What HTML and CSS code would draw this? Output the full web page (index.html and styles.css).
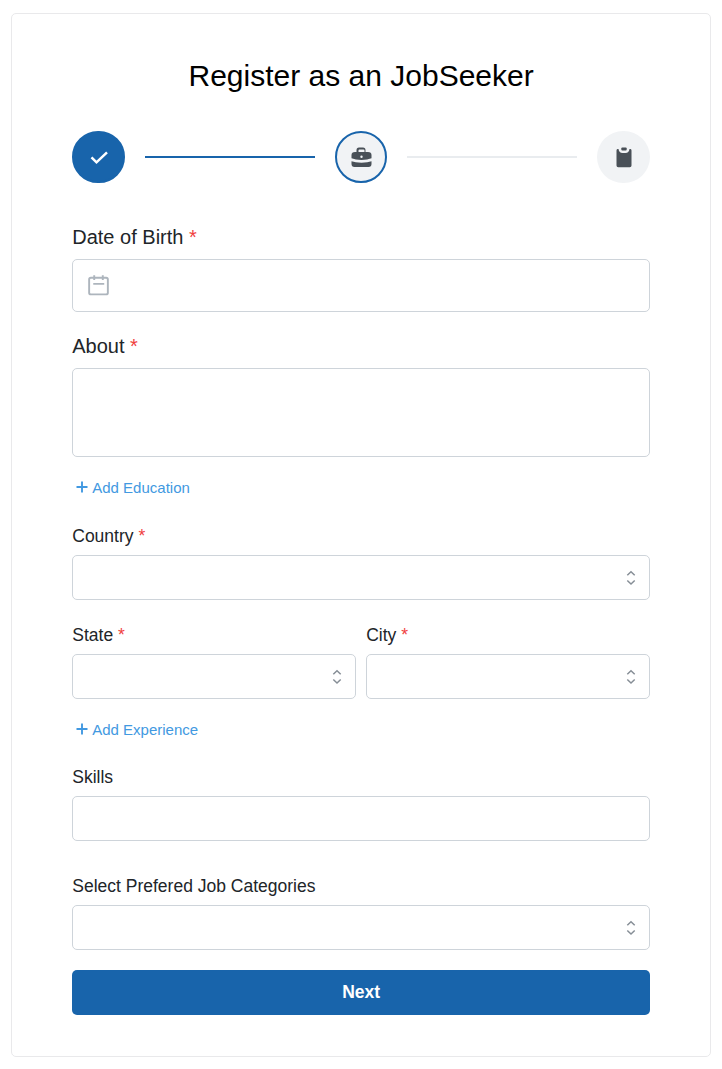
FILE: index.html
```html
<!DOCTYPE html>
<html lang="en">
<head>
<meta charset="utf-8">
<title>Register as an JobSeeker</title>
<link rel="stylesheet" href="styles.css">
</head>
<body>
<svg class="sprite" aria-hidden="true">
  <symbol id="selector" viewBox="0 0 10 16"><path d="M1.300 5.200 5 1.700 8.700 5.200M1.300 10.500 5 14 8.700 10.500" fill="none" stroke="#868e96" stroke-width="1.500"/></symbol>
  <symbol id="plus" viewBox="0 0 12 12"><path d="M6 .5v11M.5 6h11" fill="none" stroke="#4299e1" stroke-width="1.900"/></symbol>
</svg>
<main class="card">
  <h1 class="title">Register as an JobSeeker</h1>
  <div class="steps">
    <div class="step step-done">
      <svg width="20" height="16" viewBox="0 0 20 16"><path d="M2.500 8.300l5 5L18 3.300" fill="none" stroke="#fff" stroke-width="2.500"/></svg>
    </div>
    <div class="line line-done"></div>
    <div class="step step-active">
      <svg width="22" height="22" viewBox="0 0 22 22"><path fill="#495057" fill-rule="evenodd" d="M6.500 6V4.200Q6.500 1.500 9 1.500h4q2.500 0 2.500 2.700V6H18q3.500 0 3.500 3v3.300Q17.500 14 11.500 14T1.500 12.300V9q0-3 3.500-3zM8.500 6h6V4.600q0-1.100-1-1.100h-4q-1 0-1 1.100zM11.500 9.500a1.200 1.200 0 1 0 0 2.400 1.200 1.200 0 0 0 0-2.400z"/><path fill="#495057" d="M1.500 15.300q3.500 1.400 10 1.400t10-1.400V18q0 3-3 3h-14q-3 0-3-3z"/></svg>
    </div>
    <div class="line"></div>
    <div class="step step-last">
      <svg width="16" height="22" viewBox="0 0 16 22"><path fill="#495057" d="M1.500 3h1q.6 4 4 4h3q3.400 0 4-4h1q1 .4 1 1.500v15q0 1.700-1.700 1.700H2.200Q.5 21.200.5 19.500v-15Q.5 3.400 1.500 3z"/><rect x="5.300" y="1.500" width="5.400" height="3" rx="1" fill="#495057"/></svg>
    </div>
  </div>

  <label class="label label-lg">Date of Birth <span class="req">*</span></label>
  <div class="input input-date">
    <svg width="22" height="22" viewBox="0 0 22 22" fill="none" stroke="#adb5bd" stroke-width="2"><rect x="1.200" y="2.800" width="19.600" height="17.500" rx="1.800"/><path d="M6.500.3v5M15.500.3v5M5.500 9.300h11.500"/></svg>
  </div>
  <label class="label label-lg about">About <span class="req">*</span></label>
  <div class="input textarea"></div>
  <a class="add"><svg><use href="#plus"/></svg>Add Education</a>

  <label class="label">Country <span class="req">*</span></label>
  <div class="input select"><svg><use href="#selector"/></svg></div>
  <div class="columns">
    <div>
      <label class="label">State <span class="req">*</span></label>
      <div class="input select"><svg><use href="#selector"/></svg></div>
    </div>
    <div>
      <label class="label">City <span class="req">*</span></label>
      <div class="input select"><svg><use href="#selector"/></svg></div>
    </div>
  </div>
  <a class="add experience"><svg><use href="#plus"/></svg>Add Experience</a>
  <label class="label">Skills</label>
  <div class="input"></div>
  <label class="label categories">Select Prefered Job Categories</label>
  <div class="input select"><svg><use href="#selector"/></svg></div>
  <button class="next">Next</button>
</main>
</body>
</html>
```
FILE: styles.css
```css
* { box-sizing: border-box; }
body {
  margin: 0;
  padding: 13px 11px 0;
  background: #fff;
  color: #212529;
  font-family: "Liberation Sans", Arial, sans-serif;
}
.sprite { position: absolute; width: 0; height: 0; }
.card {
  height: 1044px;
  padding: 39px 60px 0 60.25px;
  border: 1px solid #e9e9eb;
  border-radius: 5px;
}
.title {
  margin: 0 0 32px;
  color: #000;
  font-size: 30px;
  font-weight: 400;
  line-height: 46px;
  text-align: center;
}
.steps {
  display: flex;
  align-items: center;
  gap: 20px;
  height: 52px;
  margin-bottom: 39px;
}
.step {
  display: flex;
  flex: none;
  align-items: center;
  justify-content: center;
  width: 52.5px;
  height: 52.5px;
  border: 2px solid #f1f3f5;
  border-radius: 50%;
  background: #f1f3f5;
}
.step-last { width: 53px; }
.step-done { border-color: #1864ab; background: #1864ab; }
.step-active { border-color: #1864ab; }
.line { flex: 1; height: 2px; background: #e9ecef; }
.line-done { background: #1864ab; }
.label {
  display: block;
  height: 28px;
  margin-bottom: 5px;
  font-size: 17.5px;
  line-height: 28px;
}
.label-lg {
  height: 30px;
  margin-bottom: 7px;
  font-size: 20px;
  line-height: 30px;
}
.req { color: #f03e3e; }
.input {
  height: 45px;
  border: 1px solid #ced4da;
  border-radius: 5px;
  background: #fff;
}
.input-date {
  display: flex;
  align-items: center;
  height: 53px;
  padding-left: 15px;
}
.input-date svg { width: 21px; height: 21px; }
.about { margin-top: 19px; }
.textarea { height: 89px; }
.select {
  display: flex;
  align-items: center;
  justify-content: flex-end;
  padding-right: 13px;
}
.select svg { width: 10px; height: 16px; }
.add {
  display: flex;
  align-items: center;
  gap: 4px;
  height: 24px;
  margin: 19px 0 22px;
  padding-left: 4px;
  color: #4299e1;
  font-size: 15px;
  line-height: 24px;
}
.add svg { width: 12px; height: 12px; margin-bottom: 2px; }
.columns {
  display: grid;
  grid-template-columns: 1fr 1fr;
  gap: 10px;
  margin-top: 21px;
}
.experience { margin-bottom: 21px; }
.categories { margin-top: 31px; }
.next {
  display: block;
  width: 100%;
  height: 45px;
  margin-top: 20px;
  padding: 0;
  border: 0;
  border-radius: 5px;
  background: #1864ab;
  color: #fff;
  font: bold 17.5px "Liberation Sans", Arial, sans-serif;
}
```
